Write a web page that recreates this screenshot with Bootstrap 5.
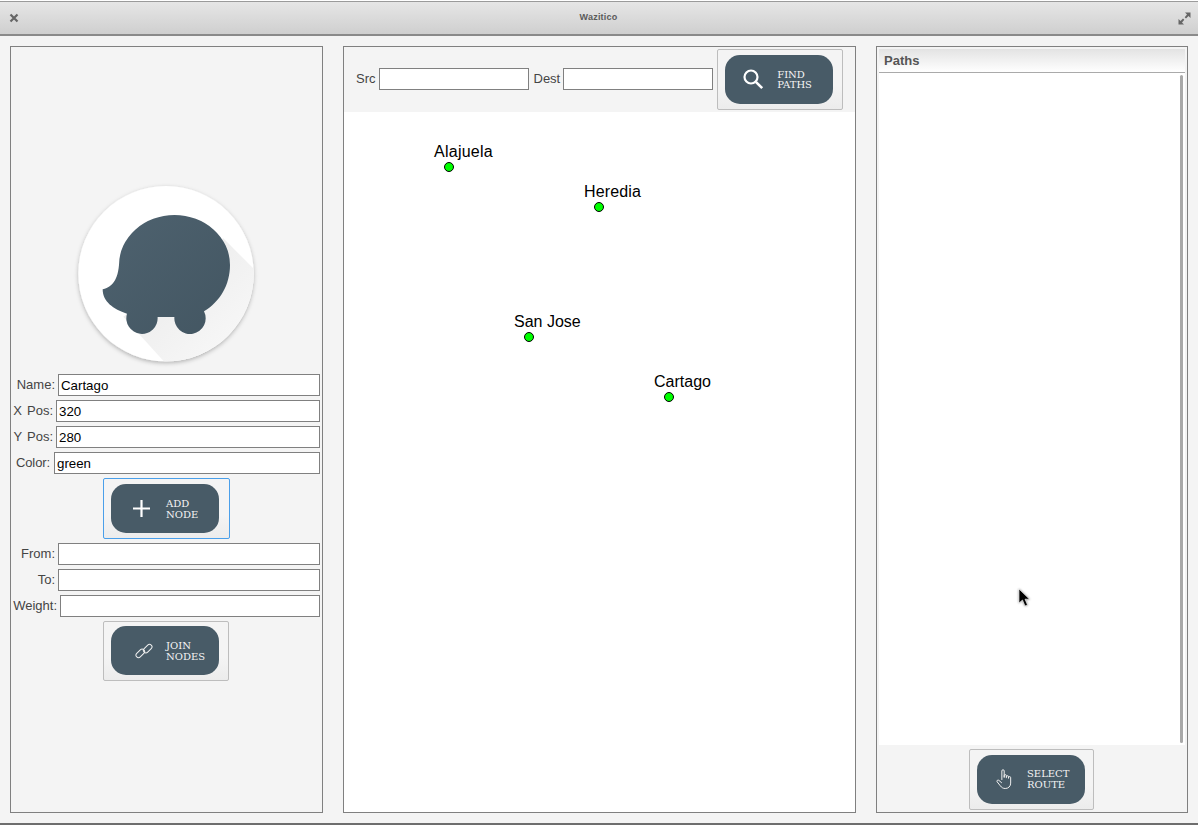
<!DOCTYPE html>
<html lang="en"><head><meta charset="utf-8"><title>Wazitico</title>
<link href="https://cdn.jsdelivr.net/npm/bootstrap@5.3.0/dist/css/bootstrap.min.css" rel="stylesheet">
<style>
html,body{height:825px;overflow:hidden}
body{background:#f4f4f4;font-family:"Liberation Sans",Arial,sans-serif;font-size:13px;color:#444;position:relative}
.deskstrip-top{height:1px;background:#fff;overflow:hidden}
.titlebar{height:35px;background:linear-gradient(#e6e6e6,#cfcfcf);border-top:1px solid #9b9b9b;border-bottom:2px solid #8a8a8a;padding:0 7px 0 9px}
.wintitle{font-size:9px;font-weight:700;color:#5a5a5a;letter-spacing:.2px}
.workarea{height:787px;padding:10px;gap:20px}
.panelbox{border:1px solid #808080;height:767px;flex:none}
.pleft{width:313px;padding:0 2px}
.pmid{width:513px}
.pright{width:312px;padding:2px}
.logoart{display:block;margin:123px auto 4px;width:213px;height:200px}
.frow{height:22px;margin-bottom:4px;gap:3px}
.flabel{line-height:22px;white-space:nowrap}
.widegap{word-spacing:1.5px}
.colorlabel{letter-spacing:-.1px;margin-right:1px}
.ftext{height:22px;padding:1px 2px;border:1px solid #808080;border-radius:0;font-size:13.3px;line-height:18px;color:#000;background:#fff;flex:none}
.ftext:focus{border-color:#808080;box-shadow:none}
.w150{width:150px}.w260{width:260px}.w262{width:262px}.w264{width:264px}.w266{width:266px}
.outerbtn{display:inline-block;padding:5px 9px 5px 7px;border:1px solid #bdbdbd;border-radius:2px;background:linear-gradient(#f4f4f4 60%,#ececec);line-height:1;transition:none}
.outerbtn:hover{border-color:#bdbdbd;background:#f4f4f4}
.focusring{border-color:#4a9fea;padding-right:10px}
.slimright{padding-right:8px}
.slimtop{padding-top:4px}
.innerbtn{width:108px;height:49px;border-radius:15px;background:#485b67;color:#f4f4f4;font-family:"DejaVu Serif",serif;font-size:10px;line-height:10.5px;text-align:left}
.iconcell{flex:none}
.celladd{width:55px;padding-left:21px}
.celljoin{width:55px;padding-left:24px}
.cellfind{width:52px;padding-left:17px}
.cellselect{width:50px;padding-left:19px}
.lowerwords{padding-top:2px}
.addwrap{margin-bottom:4px;margin-top:4px}
.joinwrap{margin-top:4px;margin-left:-1px}
.midhead{height:65px;background:#f4f4f4;padding:0 12px 1px;gap:3px}
.midhead .flabel{margin-bottom:1px}
.destgap{margin-left:2px}
.findgap{margin-left:1px}
.canvasarea{height:700px;background:#fff}
.canvasarea svg{display:block}
.nodetext{font-family:"Liberation Sans",Arial,sans-serif;font-size:16px;fill:#000}
.spreadwide{letter-spacing:.25px}
.spreadsome{letter-spacing:.14px}
.pathshead{height:24px;background:linear-gradient(#e3e3e3,#fff);border-bottom:1px solid #aaa;font-weight:700;color:#555;padding:3px 5px;line-height:17px}
.pathslist{height:672px;background:#fff;position:relative}
.scrollthumb{position:absolute;right:2px;top:2px;width:3px;height:668px;background:#a9a9a9;border-radius:2px}
.pathsfoot{padding-top:4px;margin-left:-1px}
.deskstrip-bot{position:absolute;left:0;right:0;top:823px;height:2px;background:#6e6e6e}
.pointer{position:absolute;left:1018px;top:588px;filter:drop-shadow(0 0 1px rgba(0,0,0,.45))}
</style></head>
<body>
<div class="deskstrip-top"></div>
<div class="titlebar d-flex align-items-center justify-content-between">
  <svg width="10" height="10" viewBox="0 0 10 10"><path d="M1.5 1.5l7 7M8.5 1.5l-7 7" stroke="#666" stroke-width="2.2"/></svg>
  <span class="wintitle">Wazitico</span>
  <svg width="13" height="13" viewBox="0 0 13 13" fill="#666"><path d="M7 0.5h5.5V6L10.5 4 8 6.5 6.7 5.200 9 2.500zM0.500 12.500V7L2.500 9 5 6.500 6.300 7.800 4 10.500 6 12.500z"/></svg>
</div>
<div class="workarea d-flex">
  <div class="panelbox pleft">
    <svg class="logoart" viewBox="0 0 639 600">
      <defs><clipPath id="discclip"><circle cx="318" cy="311" r="263"/></clipPath>
      <filter id="discshadow" x="-10%" y="-10%" width="120%" height="120%"><feDropShadow dx="0" dy="5" stdDeviation="7" flood-color="#000" flood-opacity=".28"/></filter>
      <linearGradient id="blobshade" x1="0" y1="0" x2="1" y2="1"><stop offset="0" stop-color="#4e626f"/><stop offset="1" stop-color="#435662"/></linearGradient>
      <linearGradient id="longshade" x1="0.2" y1="0.2" x2="0.9" y2="0.9"><stop offset="0" stop-color="#ebebeb"/><stop offset="1" stop-color="#f9f9f9"/></linearGradient></defs>
      <circle cx="318" cy="311" r="263" fill="#fff" filter="url(#discshadow)"/>
      <path clip-path="url(#discclip)" d="M490 205L600 315V600H335L190 440Z" fill="url(#longshade)"/>
      <path fill="url(#blobshade)" d="M128 358C150 352 172 340 177 285A166.500 150 0 0 1 510 285C510 345 480 395 432 424A47 47 0 1 1 343.200 441H292.800A47 47 0 1 1 201 431C160 418 128 395 128 358Z"/>
    </svg>
    <div class="frow d-flex justify-content-end"><label class="flabel">Name:</label><input class="form-control ftext w262" value="Cartago"></div>
    <div class="frow d-flex justify-content-end"><label class="flabel widegap">X Pos:</label><input class="form-control ftext w264" value="320"></div>
    <div class="frow d-flex justify-content-end"><label class="flabel widegap">Y Pos:</label><input class="form-control ftext w264" value="280"></div>
    <div class="frow d-flex justify-content-end"><label class="flabel colorlabel">Color:</label><input class="form-control ftext w266" value="green"></div>
    <div class="text-center addwrap"><button class="btn outerbtn focusring"><span class="innerbtn d-flex align-items-center">
      <span class="iconcell celladd d-flex"><svg width="19" height="19" viewBox="0 0 19 19"><path d="M9.500 1v17M1 9.500h17" stroke="#fff" stroke-width="2.200"/></svg></span>
      <span class="lowerwords">ADD<br>NODE</span></span></button></div>
    <div class="frow d-flex justify-content-end"><label class="flabel">From:</label><input class="form-control ftext w262"></div>
    <div class="frow d-flex justify-content-end"><label class="flabel">To:</label><input class="form-control ftext w262"></div>
    <div class="frow d-flex justify-content-end"><label class="flabel">Weight:</label><input class="form-control ftext w260"></div>
    <div class="text-center joinwrap"><button class="btn outerbtn slimtop"><span class="innerbtn d-flex align-items-center">
      <span class="iconcell celljoin d-flex"><svg width="18" height="18" viewBox="0 0 18 18" fill="none" stroke="#f1f1f1" stroke-width="1"><rect x="0.300" y="8.900" width="10" height="5" rx="2.500" transform="rotate(-45 5.300 11.400)"/><rect x="7.700" y="4.100" width="10" height="5" rx="2.500" transform="rotate(-45 12.700 6.600)"/></svg></span>
      <span class="lowerwords">JOIN<br>NODES</span></span></button></div>
  </div>
  <div class="panelbox pmid">
    <div class="midhead d-flex align-items-center">
      <label class="flabel">Src</label><input class="form-control ftext w150">
      <label class="flabel destgap">Dest</label><input class="form-control ftext w150">
      <button class="btn outerbtn findgap"><span class="innerbtn d-flex align-items-center">
        <span class="iconcell cellfind d-flex"><svg width="22" height="22" viewBox="0 0 22 22" fill="none" stroke="#fff"><circle cx="9" cy="9" r="6.500" stroke-width="2.200"/><path d="M13.800 13.800l6.400 6.400" stroke-width="2.600"/></svg></span>
        <span class="lowerwords">FIND<br>PATHS</span></span></button>
    </div>
    <div class="canvasarea">
      <svg width="511" height="700" viewBox="344 112 511 700">
        <text class="nodetext spreadwide" x="434" y="157">Alajuela</text><circle cx="449" cy="167" r="4.500" fill="#0f0" stroke="#000"/>
        <text class="nodetext spreadsome" x="584" y="197">Heredia</text><circle cx="599" cy="207" r="4.500" fill="#0f0" stroke="#000"/>
        <text class="nodetext" x="514" y="327">San Jose</text><circle cx="529" cy="337" r="4.500" fill="#0f0" stroke="#000"/>
        <text class="nodetext" x="654" y="387">Cartago</text><circle cx="669" cy="397" r="4.500" fill="#0f0" stroke="#000"/>
      </svg>
    </div>
  </div>
  <div class="panelbox pright">
    <div class="pathshead">Paths</div>
    <div class="pathslist"><div class="scrollthumb"></div></div>
    <div class="pathsfoot text-center"><button class="btn outerbtn slimright"><span class="innerbtn d-flex align-items-center">
      <span class="iconcell cellselect d-flex"><svg width="18" height="23" viewBox="0 0 20 25" fill="none" stroke="#f1f1f1" stroke-width="1.100"><path d="M6.500 13V3a1.300 1.300 0 0 1 2.600 0v7.500M9.100 10V8.300a1.200 1.200 0 0 1 2.400 0V11M11.500 9.500a1.200 1.200 0 0 1 2.400 0V11.500M13.900 10.500a1.200 1.200 0 0 1 2.400 0v6c0 3.500-2.400 6-6 6-2.500 0-4-1-5.500-3L1.200 15c-.8-1.200 1-2.600 2-1.500L6.500 16.300"/></svg></span>
      <span>SELECT<br>ROUTE</span></span></button></div>
  </div>
</div>
<div class="deskstrip-bot"></div>
<svg class="pointer" width="13" height="21" viewBox="0 0 13 21"><path d="M1 1v14l3.500-3 2.500 6 2.500-1-2.500-5.800H11.500z" fill="#000" stroke="#fff" stroke-width=".6"/></svg>
<script src="https://cdn.jsdelivr.net/npm/bootstrap@5.3.0/dist/js/bootstrap.bundle.min.js"></script>
</body></html>
